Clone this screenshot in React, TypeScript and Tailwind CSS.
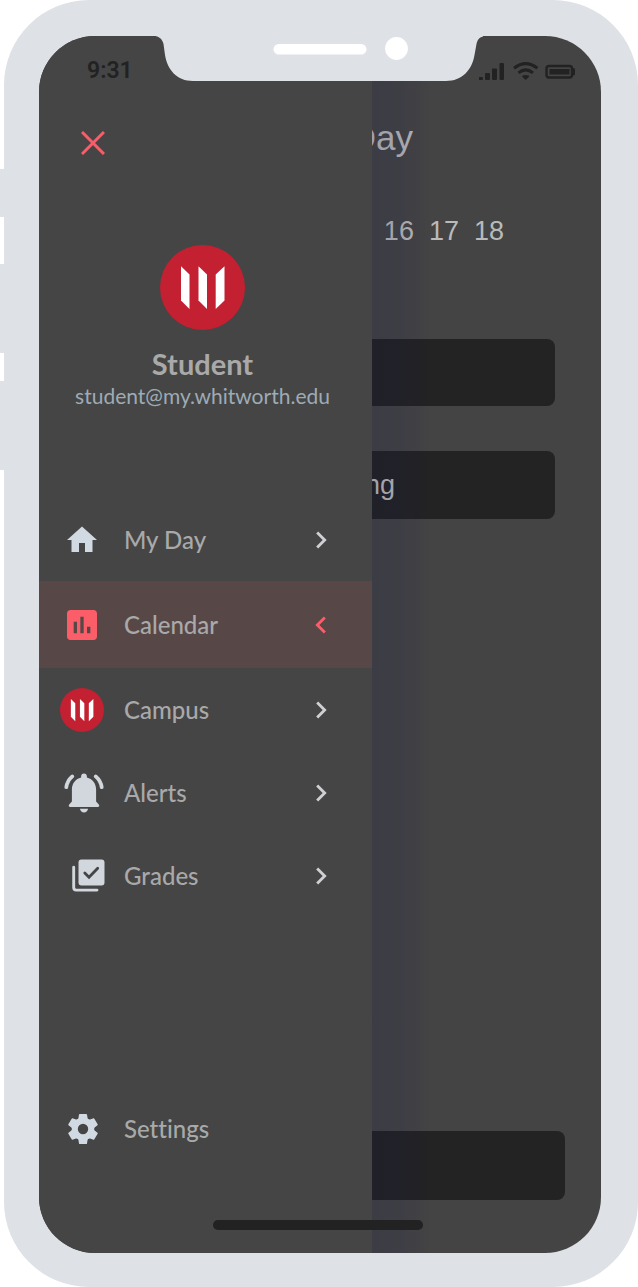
import type { ReactNode } from "react";
import { MdAssessment, MdChevronLeft, MdChevronRight, MdHome } from "react-icons/md";

function Logo({ className }: { className: string }) {
  return (
    <svg viewBox="0 0 85 85" className={className} aria-hidden="true">
      <circle cx="42.5" cy="42.5" r="42.5" fill="#c32032" />
      <g fill="#fff">
        <path d="M21 21.3 29.500 29.5V64L21 55.5Z" />
        <path d="M38.500 21.3 47 29.5V64L38.500 55.5Z" />
        <path d="M64.500 21.3 55.700 29.5V64L64.500 55.5Z" />
      </g>
    </svg>
  );
}

function BellIcon() {
  return (
    <svg viewBox="0 0 40 40" className="ml-[3px] size-10 shrink-0 text-[#d1d7dc]" aria-hidden="true">
      <path
        fill="currentColor"
        d="M20 .5c1.700 0 2.900 1.200 2.900 2.900v1.100c5.400 1.300 9.200 5.800 9.200 11.900v12l2.700 3.200c1 1.200.3 2.400-1.100 2.400H6.300c-1.400 0-2.100-1.200-1.100-2.400l2.700-3.200v-12C7.900 10.300 11.700 5.800 17.100 4.500V3.400C17.100 1.700 18.300.5 20 .5Z"
      />
      <path fill="currentColor" d="M15.900 35.700h8.200c-.5 2.300-2 3.700-4.100 3.700s-3.600-1.400-4.100-3.700Z" />
      <path
        fill="none"
        stroke="currentColor"
        strokeWidth="3.800"
        strokeLinecap="round"
        d="M8.300 3.400C4.700 6.500 2.900 10 2.300 14.200M31.700 3.400C35.300 6.500 37.100 10 37.700 14.200"
      />
    </svg>
  );
}

function GradesIcon() {
  return (
    <svg viewBox="0 0 33 33" className="ml-3 size-[33px] shrink-0 text-[#d1d7dc]" aria-hidden="true">
      <rect x="6.500" y=".4" width="26" height="26" rx="3" fill="currentColor" />
      <path d="M12.800 14 17 18.200 25.700 9.200" fill="none" stroke="#454545" strokeWidth="2.800" strokeLinecap="round" />
      <path
        d="M1.700 8.300v20.300c0 1.500 1 2.500 2.500 2.500H25"
        fill="none"
        stroke="currentColor"
        strokeWidth="2.900"
        strokeLinecap="round"
      />
    </svg>
  );
}

function GearIcon() {
  return (
    <svg viewBox="-15 -15 30 30" className="ml-0.5 size-[30px] shrink-0 text-[#d1dae2]" aria-hidden="true">
      <circle r="8.100" fill="none" stroke="currentColor" strokeWidth="5.800" />
      {[0, 60, 120, 180, 240, 300].map((angle) => (
        <path
          key={angle}
          d="M-3.300-15H3.300Q3.900-15 4-14.400L4.600-10.800 6.300-8.500H-6.300L-4.600-10.800-4-14.400Q-3.900-15-3.300-15Z"
          fill="currentColor"
          transform={`rotate(${angle})`}
        />
      ))}
    </svg>
  );
}

function NavItem({ icon, label, active = false }: { icon: ReactNode; label: string; active?: boolean }) {
  return (
    <li>
      <a
        href="#"
        aria-current={active ? "page" : undefined}
        className={
          active
            ? "flex h-[87px] items-center gap-5 bg-[#574847] pr-[34px] pl-[21px]"
            : "flex h-[83px] items-center gap-5 pr-[34px] pl-[21px]"
        }
      >
        <span className="flex w-11 shrink-0 items-center justify-center">{icon}</span>
        <span className="flex-1 text-2xl">{label}</span>
        {active ? (
          <MdChevronLeft className="size-[34px] text-[#fb5d69]" />
        ) : (
          <MdChevronRight className="size-[34px] text-[#d0d0d4]" />
        )}
      </a>
    </li>
  );
}

function DayPage() {
  return (
    <main className="col-start-1 row-start-1 flex flex-col pt-[82px] text-[#bababa]">
      <h1 className="w-[374px] text-right text-[35px] leading-10">My Day</h1>
      <div className="flex w-[465px] justify-end gap-[15px] pt-[53px] text-[27px] leading-10">
        <button type="button">16</button>
        <button type="button">17</button>
        <button type="button">18</button>
      </div>
      <div className="mx-[46px] mt-[88px] h-[67px] rounded-lg bg-[#232323]" />
      <div className="mx-[46px] mt-[45px] flex h-[68px] items-center rounded-lg bg-[#232323]">
        <span className="w-[310px] text-right text-[27px]">Meeting</span>
      </div>
      <div className="mx-9 mt-auto mb-[53px] h-[69px] rounded-lg bg-[#232323]" />
    </main>
  );
}

function Drawer() {
  return (
    <div className="z-10 col-start-1 row-start-1 flex">
      <aside className="flex w-[333px] flex-col bg-[#454545] font-[Lato,sans-serif] font-medium text-[#a9a9a9] [font-variant-ligatures:none]">
        <button type="button" aria-label="Close menu" className="mt-[95px] ml-[42px] size-6 text-[#f95d69]">
          <svg viewBox="0 0 24 24" className="size-6" aria-hidden="true">
            <path d="M1 1 23 23M23 1 1 23" stroke="currentColor" strokeWidth="3" />
          </svg>
        </button>
        <div className="mt-[90px] flex flex-col items-center pr-1.5">
          <Logo className="size-[85px]" />
          <h2 className="mt-4 text-[29px] leading-9 font-bold">Student</h2>
          <p className="text-[21px] leading-7 font-normal text-[#9eabb5]">student@my.whitworth.edu</p>
        </div>
        <nav aria-label="Main" className="mt-[88px] flex flex-1 flex-col">
          <ul>
            <NavItem icon={<MdHome className="size-9 text-[#d1dae2]" />} label="My Day" />
            <NavItem active icon={<MdAssessment className="size-10 text-[#fb5d69]" />} label="Calendar" />
            <NavItem icon={<Logo className="size-11" />} label="Campus" />
            <NavItem icon={<BellIcon />} label="Alerts" />
            <NavItem icon={<GradesIcon />} label="Grades" />
          </ul>
          <a href="#" className="mt-auto mb-[83px] flex h-[83px] items-center gap-5 pl-[21px] text-2xl">
            <span className="flex w-11 justify-center">
              <GearIcon />
            </span>
            Settings
          </a>
        </nav>
      </aside>
      <div className="w-[60px] bg-linear-to-r from-[#0f0f4b]/15 via-[#0f0f4b]/12 to-transparent" />
    </div>
  );
}

function StatusLayer() {
  return (
    <div className="pointer-events-none z-20 col-start-1 row-start-1 flex flex-col justify-between text-[#222]">
      <div className="flex items-start">
        <span className="w-[117px] pt-[19px] pl-12 font-[Roboto,sans-serif] text-[23px] leading-8 font-semibold">
          9:31
        </span>
        <svg viewBox="118 0 327 45" className="h-[45px] w-[327px] shrink-0" aria-hidden="true">
          <path
            fill="#dee1e6"
            d="M114 0H449C442 0 439.500 3 438.500 8L436.500 19C434 34 424 45 408 45H155C139 45 129.500 34 127 19L125.500 8C124.500 3 121 0 116 0Z"
          />
          <rect x="235.500" y="8" width="93" height="10.500" rx="5.200" fill="#fff" />
          <circle cx="358.500" cy="12.500" r="11.400" fill="#fff" />
        </svg>
        <svg viewBox="0 0 98 20" className="mt-[25px] mr-5 -ml-1 h-5 w-[98px] shrink-0" aria-hidden="true">
          <g fill="#222" transform="translate(-1 0)">
            <rect x="0" y="16" width="5" height="3" rx="1" />
            <rect x="7" y="12" width="5" height="7" rx="1" />
            <rect x="14" y="7.500" width="5" height="11.500" rx="1" />
            <rect x="21.500" y="2" width="4.500" height="17" rx="1" />
            <path d="M47.700 14q3.700 0 3.700 1.600L47.700 19 44 15.600q0-1.600 3.700-1.600Z" />
            <rect x="71.500" y="8" width="20" height="5.500" />
          </g>
          <g fill="none" stroke="#222" transform="translate(-1 0)">
            <path d="M36 7.200Q47.700-2 59.400 7.200" strokeWidth="3" />
            <path d="M40.500 11.800Q47.700 6 55 11.800" strokeWidth="3" />
            <rect x="68.500" y="5" width="25.500" height="11.500" rx="2.500" strokeWidth="2.400" />
            <path d="M95.500 8.500v4.500" strokeWidth="3" strokeLinecap="round" />
          </g>
        </svg>
      </div>
      <div className="mr-1 mb-[23px] h-2.5 w-[210px] self-center rounded-full bg-[#222]" />
    </div>
  );
}

export default function App() {
  return (
    <div className="flex min-h-screen bg-white font-['Liberation_Sans',sans-serif]">
      <div className="flex w-1 shrink-0 flex-col pt-[169px]" aria-hidden="true">
        <span className="h-12 bg-[#dee1e6]" />
        <span className="mt-[47px] h-[89px] bg-[#dee1e6]" />
        <span className="mt-7 h-[89px] bg-[#dee1e6]" />
      </div>
      <div className="flex flex-1 rounded-[85px] bg-[#dee1e6] pt-9 pr-[37px] pb-[34px] pl-[35px]">
        <div className="grid flex-1 overflow-hidden rounded-[56px] bg-[#444]">
          <DayPage />
          <Drawer />
          <StatusLayer />
        </div>
      </div>
    </div>
  );
}
